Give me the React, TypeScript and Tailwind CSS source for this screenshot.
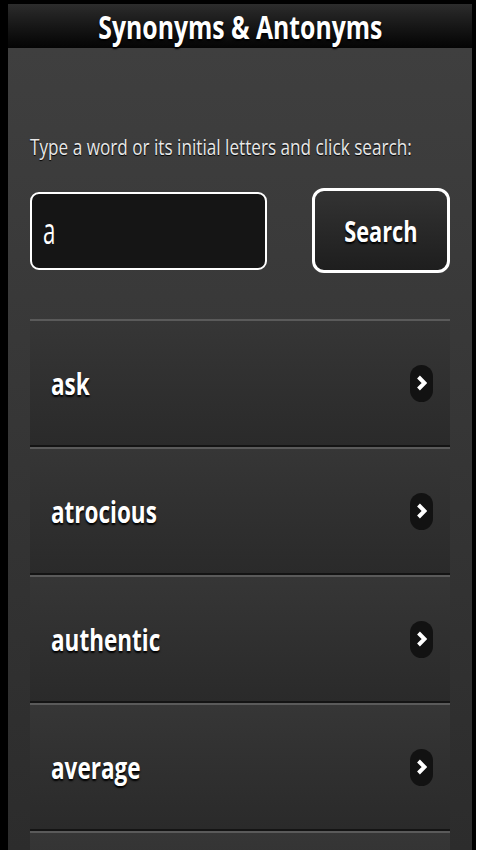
import React from 'react';

const words = ['ask', 'atrocious', 'authentic', 'average'];

const Chevron: React.FC = () => (
  <div className="w-[23px] h-[37px] rounded-full bg-[#121212] flex items-center justify-center">
    <svg width="11" height="16" viewBox="0 0 11 16">
      <path d="M2.5 2 L8.5 8 L2.5 14" fill="none" stroke="#fff" strokeWidth="4" strokeLinejoin="miter" />
    </svg>
  </div>
);

const WordRow: React.FC<{ word?: string }> = ({ word }) => (
  <div className="h-[128px] shrink-0 flex items-center justify-between pl-[21px] pr-[17px] border-t-2 border-t-[#5a5a5a] border-b-2 border-b-[#141414] bg-gradient-to-b from-[#363636] to-[#2a2a2a]">
    {word && (
      <>
        <span className="inline-block origin-left scale-x-75 text-[30px] font-bold text-white [text-shadow:0_2px_2px_#000]">
          {word}
        </span>
        <Chevron />
      </>
    )}
  </div>
);

export default function App() {
  return (
    <div className="w-[480px] h-[854px] bg-white" style={{ fontFamily: '"Open Sans", "Liberation Sans", sans-serif' }}>
      <div className="w-[476px] h-[850px] bg-black pl-[8px] pr-[4px] pt-[4px] flex flex-col overflow-hidden">
        <header className="h-[44px] shrink-0 flex items-center justify-center bg-gradient-to-b from-[#2c2c2c] via-[#171717] to-[#050505]">
          <span className="inline-block scale-x-75 text-[33px] font-bold text-white leading-none [text-shadow:0_2px_2px_#000]">
            Synonyms &amp; Antonyms
          </span>
        </header>
        <main className="flex-1 flex flex-col px-[22px] pt-[84px] bg-gradient-to-b from-[#3f3f3f] to-[#2c2c2c] overflow-hidden">
          <p className="origin-left scale-x-[0.78] text-[22px] text-[#e8e8e8] leading-[28px] whitespace-nowrap [text-shadow:0_1px_1px_#000]">
            Type a word or its initial letters and click search:
          </p>
          <div className="mt-[28px] flex items-center justify-between">
            <div className="w-[237px] h-[78px] rounded-[9px] border-2 border-white bg-[#151515] flex items-center px-[11px]">
              <span className="inline-block origin-left scale-x-[0.62] text-[36px] text-white leading-none">a</span>
            </div>
            <button className="w-[138px] h-[85px] rounded-[12px] border-[3px] border-white bg-gradient-to-b from-[#333] to-[#1e1e1e] flex items-center justify-center">
              <span className="inline-block scale-x-75 text-[29px] font-bold text-white leading-none [text-shadow:0_2px_2px_#000]">Search</span>
            </button>
          </div>
          <div className="mt-[46px] flex flex-col">
            {words.map((w) => (
              <WordRow key={w} word={w} />
            ))}
            <WordRow />
          </div>
        </main>
      </div>
    </div>
  );
}
